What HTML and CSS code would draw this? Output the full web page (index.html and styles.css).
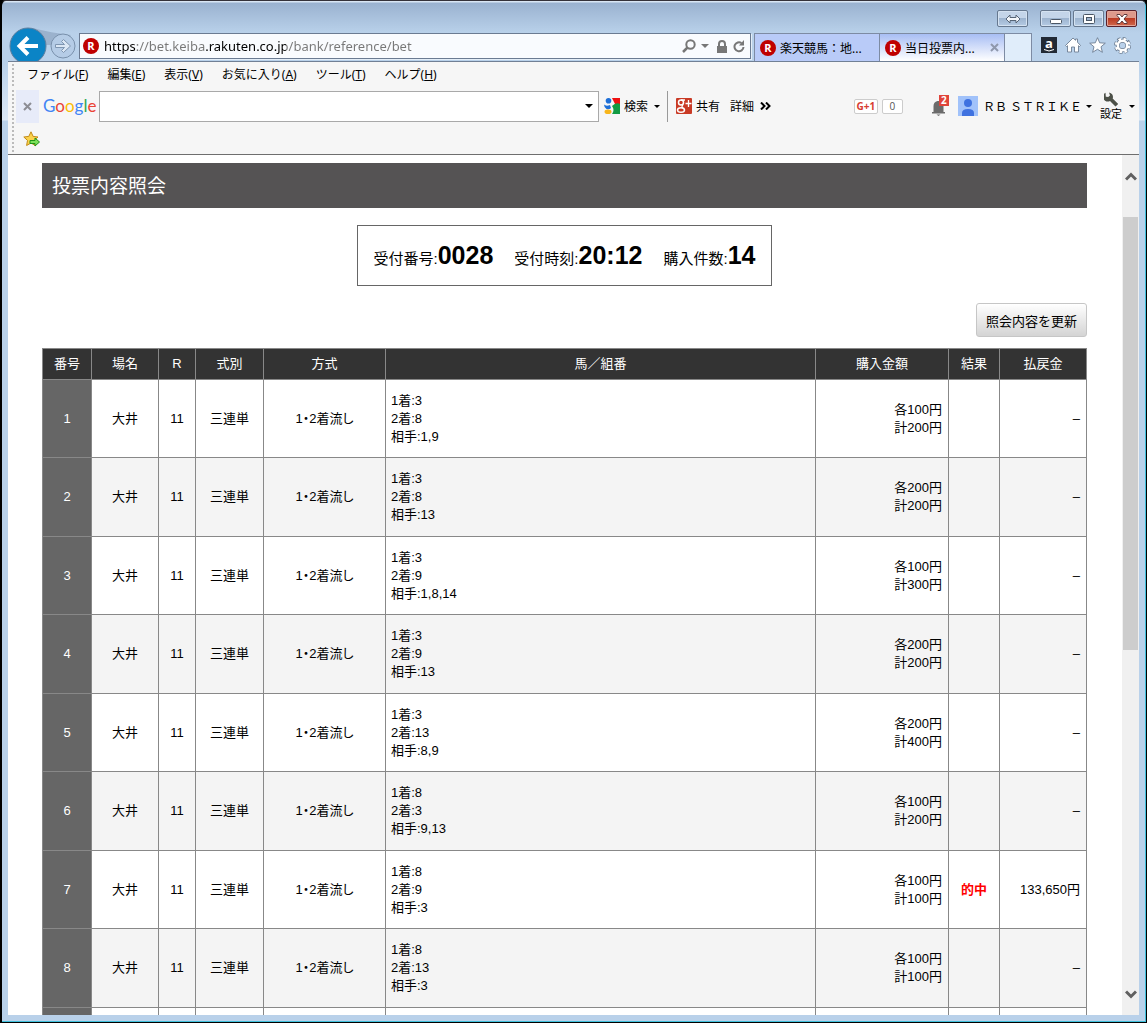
FILE: index.html
```html
<!DOCTYPE html>
<html lang="ja">
<head>
  <meta charset="UTF-8">
  <meta name="viewport" content="width=device-width, initial-scale=1.0">
  <title>投票内容照会</title>
  <link rel="stylesheet" href="styles.css">
</head>
<body>
<div class="window">

  <div class="caption">
    <button class="cap-btn" aria-label="切り替え"><svg width="16" height="10" viewBox="0 0 16 10"><path d="M1 5l4-4v2.500h6V1l4 4-4 4V6.500H5V9z" fill="#f4f7fb" stroke="#566577"/></svg></button>
    <button class="cap-btn cap-gap" aria-label="最小化"><svg width="12" height="10" viewBox="0 0 12 10"><rect x=".5" y="5.500" width="11" height="4" rx="1" fill="#fff" stroke="#4a5665"/></svg></button>
    <button class="cap-btn" aria-label="最大化"><svg width="12" height="10" viewBox="0 0 12 10"><rect x=".5" y=".5" width="11" height="9" rx="1" fill="#fff" stroke="#4a5665"/><rect x="3.500" y="3.500" width="5" height="3" fill="#9db4cf" stroke="#4a5665"/></svg></button>
    <button class="cap-btn cap-close" aria-label="閉じる"><svg width="12" height="10" viewBox="0 0 12 10"><path d="M1 .5h3L6 3l2-2.500h3v1L8 5l3 3.500v1H8L6 7 4 9.500H1v-1L4 5 1 1.500z" fill="#fff" stroke="#5d3a3d"/></svg></button>
  </div>

  <div class="nav">
    <button class="back" aria-label="戻る">
      <svg width="38" height="34" viewBox="0 0 38 34">
        <path d="M24 1Q42 6 62 8L50 18H36z" fill="#9bb2cd"/>
        <circle cx="19" cy="19" r="18" fill="#0b84c6" stroke="#5f7f9e"/>
        <path d="M29 19H11M19 10.500L10.500 19l8.500 8.500" fill="none" stroke="#fff" stroke-width="4"/>
      </svg>
    </button>
    <button class="forward" aria-label="進む">
      <svg width="26" height="26" viewBox="0 0 26 26">
        <circle cx="13" cy="13" r="12" fill="#b5cce6" stroke="#7990ab"/>
        <path d="M5.500 11.500h9L11.500 8.500 13.500 6.500 20.500 13l-7 6.500-2-2 3-3h-9z" fill="#dbe7f4" stroke="#7e95b0"/>
      </svg>
    </button>
    <form class="address">
      <span class="favicon">R</span>
      <input class="url" type="text" aria-label="アドレス" value="https://bet.keiba.rakuten.co.jp/bank/reference/bet">
      <svg width="14" height="14" viewBox="0 0 14 14"><circle cx="8.500" cy="5.500" r="4.200" fill="none" stroke="#777" stroke-width="2"/><path d="M5.500 8.500L1 13" stroke="#777" stroke-width="2.500"/></svg>
      <i class="arrow gray"></i>
      <svg class="lock" width="10" height="13" viewBox="0 0 10 13"><path d="M2 6V4a3 3 0 0 1 6 0v2" fill="none" stroke="#777" stroke-width="2"/><rect y="6" width="10" height="7" fill="#777"/></svg>
      <svg width="12" height="13" viewBox="0 0 12 13"><path d="M8.500 3A4.500 4.500 0 1 0 10.500 7" fill="none" stroke="#777" stroke-width="2"/><path d="M6 5.500h5V0z" fill="#777"/></svg>
    </form>
    <a class="tab" href="#"><span class="favicon">R</span>楽天競馬：地...</a>
    <a class="tab active" href="#"><span class="favicon">R</span>当日投票内...
      <svg class="tab-close" width="9" height="9" viewBox="0 0 9 9"><path d="M1 1l7 7M8 1L1 8" stroke="#8f98ac" stroke-width="2"/></svg>
    </a>
    <button class="new-tab" aria-label="新しいタブ"></button>
    <div class="tools">
      <a class="amazon" href="#">a<svg width="10" height="3" viewBox="0 0 10 3"><path d="M0 .5q5 3 10 0" fill="none" stroke="#fff"/></svg></a>
      <svg width="16" height="16" viewBox="0 0 16 16"><path d="M8 1l2.500 2.300V2h2v3.200L15.500 8.500l-1 1-1-.8V15h-4v-5h-3v5h-4V8.700l-1 .8-1-1z" fill="#fff" stroke="#6d7e93" stroke-width=".9"/></svg>
      <svg width="17" height="16" viewBox="0 0 17 16"><path d="M8.500.7l2.200 5.100 5.600.4-4.300 3.600 1.400 5.500-4.900-3-4.900 3L5 9.800.7 6.200l5.600-.4z" fill="#fff" stroke="#6d7e93" stroke-width=".9"/></svg>
      <svg width="17" height="17" viewBox="0 0 17 17"><circle cx="8.500" cy="8.500" r="6.700" fill="none" stroke="#6d7e93" stroke-width="3.600" stroke-dasharray="3.300 1.960"/><circle cx="8.500" cy="8.500" r="4.800" fill="none" stroke="#6d7e93" stroke-width="4"/><circle cx="8.500" cy="8.500" r="6.500" fill="none" stroke="#fff" stroke-width="2.600" stroke-dasharray="2.500 2.605" stroke-dashoffset="-.3"/><circle cx="8.500" cy="8.500" r="4.700" fill="none" stroke="#fff" stroke-width="2.400"/><circle cx="8.500" cy="8.500" r="2.600" fill="#bad1ea"/></svg>
    </div>
  </div>

  <div class="bars">
    <div class="menu">
      <a href="#">ファイル(<u>F</u>)</a>
      <a href="#">編集(<u>E</u>)</a>
      <a href="#">表示(<u>V</u>)</a>
      <a href="#">お気に入り(<u>A</u>)</a>
      <a href="#">ツール(<u>T</u>)</a>
      <a href="#">ヘルプ(<u>H</u>)</a>
    </div>
    <div class="google">
      <button class="bar-close" aria-label="ツールバーを閉じる"><svg width="9" height="9" viewBox="0 0 9 9"><path d="M1 1l7 7M8 1L1 8" stroke="#8d8d94" stroke-width="2"/></svg></button>
      <a class="logo" href="#"><span class="b">G</span><span class="r">o</span><span class="y">o</span><span class="b">g</span><span class="g">l</span><span class="r">e</span></a>
      <div class="combo">
        <input type="text" aria-label="Google 検索">
        <i class="arrow"></i>
      </div>
      <button class="bar-btn">
        <svg width="16" height="16" viewBox="0 0 16 16"><path d="M8 0h8v7l-5-1z" fill="#ee1111"/><path d="M8 8q4-4 8-2v10H8q3-4 0-8z" fill="#129b43"/><circle cx="4.500" cy="2.800" r="2.800" fill="#1d6fd8"/><path d="M0 6.500q2 2 6 .5l1 3q-2 2-4.500 1Q0 9.500 0 6.500z" fill="#1d6fd8"/><ellipse cx="4" cy="13.700" rx="3.500" ry="2.300" fill="#f7b51b"/></svg>
        検索
      </button>
      <i class="arrow search-arrow"></i>
      <span class="split"></span>
      <button class="bar-btn share">
        <svg width="16" height="16" viewBox="0 0 16 16"><rect width="16" height="16" rx="1" fill="#c93a25"/><circle cx="5" cy="4.500" r="2.500" fill="none" stroke="#fff" stroke-width="1.500"/><path d="M5 2h4M7 7q-2 1.500 0 3" fill="none" stroke="#fff" stroke-width="1.300"/><ellipse cx="5" cy="12" rx="3.500" ry="2.300" fill="none" stroke="#fff" stroke-width="1.500"/><path d="M12.500 2v7M9.500 5.500h6" stroke="#fff" stroke-width="1.300"/></svg>
        共有
      </button>
      <button class="bar-btn more">詳細
        <svg width="11" height="8" viewBox="0 0 11 8"><path d="M1 .5L4.500 4 1 7.500M6 .5L9.500 4 6 7.500" fill="none" stroke="#000" stroke-width="2"/></svg>
      </button>
      <div class="account">
        <span class="plus"><b>G+1</b></span>
        <span class="count">0</span>
        <span class="bell">
          <svg width="15" height="16" viewBox="0 0 15 16"><path d="M1 12h1.500V6q0-4 4-5h2q4 1 4 5v6H14v1.500H1z" fill="#6b6b6b"/><path d="M5.500 14.500h4L7.500 16z" fill="#6b6b6b"/></svg>
          <span class="badge">2</span>
        </span>
        <svg class="avatar" width="20" height="20" viewBox="0 0 20 20"><rect width="20" height="20" fill="#a1c2fa"/><circle cx="10" cy="7" r="4" fill="#3f72e0"/><path d="M4 20v-3q0-4 6-4t6 4v3z" fill="#3f72e0"/></svg>
        <a class="user" href="#">ＲＢ ＳＴＲＩＫＥ</a>
        <i class="arrow"></i>
        <button class="settings">
          <svg width="15" height="15" viewBox="0 0 15 15"><path d="M1.500.8A4.500 4.500 0 0 0 6 9l5.500 5.500L14.200 12 8.700 6.500A4.500 4.500 0 0 0 5 .5L6 3.500 4.200 5 .8 4.500A4 4 0 0 0 2 7" fill="#4d5148"/></svg>
          設定
        </button>
        <i class="arrow"></i>
      </div>
    </div>
    <div class="favorites">
      <svg width="17" height="16" viewBox="0 0 17 16"><path d="M8 .8l2.100 4.600 4.900.6-3.600 3.400.9 5.100L8 12l-4.400 2.500.9-5.100L.8 6l5-.6z" fill="#fbd24c" stroke="#c28a16"/><path d="M7 9.500h5V7l4.500 4-4.500 4v-2.500H7z" fill="#7be05a" stroke="#1f9417"/></svg>
    </div>
  </div>

  <div class="view">
    <main class="page">
      <h1>投票内容照会</h1>
      <div class="summary">
        <span>受付番号:<strong>0028</strong></span>
        <span>受付時刻:<strong>20:12</strong></span>
        <span>購入件数:<strong>14</strong></span>
      </div>
      <div class="update"><button class="update-btn">照会内容を更新</button></div>
      <table class="bets">
        <colgroup>
          <col class="c-no"><col class="c-place"><col class="c-race"><col class="c-type"><col class="c-method"><col><col class="c-amount"><col class="c-result"><col class="c-refund">
        </colgroup>
        <thead>
          <tr><th>番号</th><th>場名</th><th>R</th><th>式別</th><th>方式</th><th>馬／組番</th><th>購入金額</th><th>結果</th><th>払戻金</th></tr>
        </thead>
        <tbody>
          <tr><th>1</th><td>大井</td><td>11</td><td>三連単</td><td>1・2着流し</td><td class="horses">1着:3<br>2着:8<br>相手:1,9</td><td class="num">各100円<br>計200円</td><td></td><td class="num">–</td></tr>
          <tr><th>2</th><td>大井</td><td>11</td><td>三連単</td><td>1・2着流し</td><td class="horses">1着:3<br>2着:8<br>相手:13</td><td class="num">各200円<br>計200円</td><td></td><td class="num">–</td></tr>
          <tr><th>3</th><td>大井</td><td>11</td><td>三連単</td><td>1・2着流し</td><td class="horses">1着:3<br>2着:9<br>相手:1,8,14</td><td class="num">各100円<br>計300円</td><td></td><td class="num">–</td></tr>
          <tr><th>4</th><td>大井</td><td>11</td><td>三連単</td><td>1・2着流し</td><td class="horses">1着:3<br>2着:9<br>相手:13</td><td class="num">各200円<br>計200円</td><td></td><td class="num">–</td></tr>
          <tr><th>5</th><td>大井</td><td>11</td><td>三連単</td><td>1・2着流し</td><td class="horses">1着:3<br>2着:13<br>相手:8,9</td><td class="num">各200円<br>計400円</td><td></td><td class="num">–</td></tr>
          <tr><th>6</th><td>大井</td><td>11</td><td>三連単</td><td>1・2着流し</td><td class="horses">1着:8<br>2着:3<br>相手:9,13</td><td class="num">各100円<br>計200円</td><td></td><td class="num">–</td></tr>
          <tr><th>7</th><td>大井</td><td>11</td><td>三連単</td><td>1・2着流し</td><td class="horses">1着:8<br>2着:9<br>相手:3</td><td class="num">各100円<br>計100円</td><td class="hit">的中</td><td class="num">133,650円</td></tr>
          <tr><th>8</th><td>大井</td><td>11</td><td>三連単</td><td>1・2着流し</td><td class="horses">1着:8<br>2着:13<br>相手:3</td><td class="num">各100円<br>計100円</td><td></td><td class="num">–</td></tr>
          <tr><th></th><td></td><td></td><td></td><td></td><td></td><td></td><td></td><td></td></tr>
        </tbody>
      </table>
    </main>
    <div class="scrollbar">
      <button class="scroll-btn" aria-label="上へ"><svg width="12" height="9" viewBox="0 0 12 9"><path d="M1 7.500l5-5 5 5" fill="none" stroke="#606060" stroke-width="3"/></svg></button>
      <div class="track"><div class="thumb"></div></div>
      <button class="scroll-btn" aria-label="下へ"><svg width="12" height="9" viewBox="0 0 12 9"><path d="M1 1.500l5 5 5-5" fill="none" stroke="#606060" stroke-width="3"/></svg></button>
    </div>
  </div>

</div>
</body>
</html>
```
FILE: styles.css
```css
* { box-sizing: border-box; }
body {
  margin: 0;
  background: #000;
  font-family: "Liberation Sans", "Noto Sans CJK JP", sans-serif;
  font-size: 13px;
  color: #000;
}
button, input {
  font: inherit;
  color: inherit;
  border: 0;
  padding: 0;
  margin: 0;
  background: none;
}
a { color: inherit; text-decoration: none; }
svg { display: block; flex: none; }

/* window frame */
.window {
  display: flex;
  flex-direction: column;
  height: 100vh;
  padding: 0 7px 7px 6px;
  overflow: hidden;
  border: 1px solid #000;
  border-top-color: #35323a;
  border-left-width: 2px;
  border-radius: 6px 6px 0 0;
  background: linear-gradient(#d9e6f4 1px, #9ab2d0 2px, #b9d1ea 32px, #b9d1ea 62px, #dce8f5 119px, #b9d1ea 120px);
  box-shadow: inset -1px -1px #3fc0dc;
}
.caption {
  display: flex;
  justify-content: flex-end;
  gap: 2px;
  height: 32px;
  flex: none;
  padding: 9px 2px 0 0;
}
.cap-btn {
  display: flex;
  align-items: center;
  justify-content: center;
  width: 31px;
  height: 17px;
  border: 1px solid #66788f;
  border-radius: 2px;
  background: linear-gradient(#c4d5e9 50%, #9db4cf 50%, #b5cbe4);
  box-shadow: inset 0 0 0 1px #d4e2f1;
}
.cap-gap { margin-left: 10px; }
.cap-close {
  border-color: #59202a;
  background: linear-gradient(#dd998b 50%, #bb3a22 50%, #d0694d);
  box-shadow: inset 0 0 0 1px #e3a598;
}

/* address bar and tabs */
.nav {
  display: flex;
  flex: none;
  height: 28px;
  font-family: "Noto Sans", "Noto Sans CJK JP", sans-serif;
}
.back { width: 38px; height: 34px; margin: -6px 3px 0 1px; }
.back svg { overflow: visible; }
.forward { width: 26px; height: 26px; position: relative; }
.address {
  display: flex;
  align-items: center;
  flex: 1;
  height: 26px;
  margin: 0 3px 0 3px;
  padding: 0 5px 0 3px;
  border: 1px solid #6b7b92;
  background: #f9fbfe;
  box-shadow: 1px 1px #e4eef8;
}
.favicon {
  width: 16px;
  height: 16px;
  flex: none;
  border-radius: 8px;
  background: #bf0000;
  color: #fff;
  font: bold 11px/16px "Open Sans", sans-serif;
  text-align: center;
}
.url {
  flex: 1;
  min-width: 0;
  height: 22px;
  padding-left: 5px;
  background: linear-gradient(90deg, #000 37px, #777 37px, #777 107px, #000 107px, #000 187px, #777 187px);
  background-clip: text;
  color: transparent;
}
.arrow {
  flex: none;
  border: 4px solid transparent;
  border-top-color: #000;
  border-bottom: 0;
}
.arrow.gray { margin: 0 8px 0 5px; border-top-color: #777; }
.lock { margin-right: 6px; }
.tab {
  display: flex;
  align-items: center;
  gap: 4px;
  width: 125px;
  height: 28px;
  padding-left: 5px;
  border: 1px solid #7d8ba3;
  border-width: 1px 0 0 1px;
  background: #b9cbf8;
  font-size: 12px;
  white-space: nowrap;
}
.tab.active {
  width: 126px;
  border-right-width: 1px;
  background: linear-gradient(#a8bef4, #fff);
}
.tab-close { margin: 0 5px 0 auto; }
.new-tab {
  width: 27px;
  border: 1px solid #7d8ba3;
  border-width: 1px 1px 0 0;
  background: #e0edfa;
}
.tools {
  display: flex;
  align-items: center;
  gap: 8px;
  padding: 0 8px 4px 9px;
}
.amazon {
  display: flex;
  flex-direction: column;
  align-items: center;
  width: 16px;
  height: 16px;
  background: #222a35;
  color: #fff;
  font: bold 13px/12px "Open Sans", sans-serif;
}

/* toolbars */
.bars {
  flex: none;
  height: 94px;
  border-top: 1px solid #718095;
  border-bottom: 1px solid #6e6e6e;
  background: #f6f6f6;
  font-family: "Noto Sans", "Noto Sans CJK JP", sans-serif;
  font-size: 12px;
}
.menu, .google, .favorites {
  display: flex;
  align-items: center;
  background: radial-gradient(circle, #bbb 1px, transparent 1px) 3px 1px / 4px 4px repeat-y;
}
.menu { gap: 19px; height: 26px; padding-left: 19px; }
.menu a { line-height: 24px; }
.google { height: 36px; padding-left: 8px; }
.favorites { height: 30px; padding-left: 15px; }
.bar-close {
  display: flex;
  align-items: center;
  justify-content: center;
  width: 23px;
  height: 33px;
  background: #e7ebf9;
}
.logo {
  width: 60px;
  flex: none;
  padding-left: 4px;
  font: 17px/30px Lato, sans-serif;
}
.b { color: #4285f4; }
.r { color: #ea4335; }
.y { color: #fbbc05; }
.g { color: #34a853; }
.combo {
  display: flex;
  align-items: center;
  flex: 1;
  max-width: 500px;
  height: 31px;
  padding-right: 5px;
  border: 1px solid #a9a9a9;
  background: #fff;
}
.combo input { flex: 1; min-width: 0; }
.bar-btn {
  display: flex;
  align-items: center;
  gap: 4px;
  margin-left: 5px;
  white-space: nowrap;
}
.search-arrow { border-width: 3px 3px 0; margin: 0 7px 0 6px; }
.split { width: 1px; height: 31px; background: #999; }
.share { margin-left: 8px; }
.more { margin-left: 10px; gap: 6px; }
.account {
  display: flex;
  align-items: center;
  margin-left: auto;
  padding-right: 4px;
}
.account .arrow { border-width: 3px 3px 0; }
.plus, .count {
  height: 15px;
  border: 1px solid #ccc;
  border-radius: 2px;
  background: #fff;
  font: 10px/13px "Open Sans", sans-serif;
  text-align: center;
}
.plus { width: 24px; color: #d73d32; }
.count { width: 21px; margin: 0 28px 0 4px; color: #555; }
.bell { position: relative; width: 18px; margin-right: 9px; padding-top: 4px; }
.badge {
  position: absolute;
  top: -1px;
  right: 0;
  width: 10px;
  background: #e0443a;
  color: #fff;
  font: bold 10px/11px "Open Sans", sans-serif;
  text-align: center;
}
.user { margin: 0 4px 0 5px; white-space: nowrap; }
.settings {
  display: flex;
  flex-direction: column;
  align-items: center;
  margin: 0 7px 0 8px;
  font-size: 11px;
  line-height: 14px;
}

/* page */
.view {
  display: flex;
  flex: 1;
  min-height: 0;
  background: #fff;
}
.page {
  flex: 1;
  min-width: 0;
  overflow: hidden;
  padding: 8px 35px 0 34px;
}
h1 {
  margin: 0;
  padding: 2px 0 0 10px;
  background: #555354;
  color: #fff;
  font-size: 19px;
  font-weight: normal;
  line-height: 43px;
}
.summary {
  display: flex;
  justify-content: center;
  align-items: center;
  gap: 21px;
  width: fit-content;
  height: 61px;
  margin: 17px auto;
  padding: 0 16px;
  border: 1px solid #666;
  font-size: 15px;
}
.summary strong { font-size: 25px; }
.update { display: flex; justify-content: flex-end; margin-bottom: 11px; }
.update-btn {
  height: 34px;
  padding: 0 9px;
  border: 1px solid #c6c6c6;
  border-radius: 3px;
  background: linear-gradient(#fff, #d4d4d4);
}
.bets {
  width: 100%;
  table-layout: fixed;
  border-collapse: collapse;
  line-height: 18px;
  text-align: center;
  font-feature-settings: "palt";
}
.bets th, .bets td {
  height: 78px;
  padding: 0 6px;
  border: 1px solid #888;
  font-weight: normal;
}
.bets tr:nth-child(even) > * { height: 79px; }
.bets tr:nth-child(even) td { background: #f4f4f4; }
.bets th { background: #666; color: #fff; }
.bets thead th { height: 31px; background: #333; }
.bets .horses { padding-left: 5px; text-align: left; }
.bets .num { text-align: right; }
.bets .hit { padding: 0; color: #f00; font-weight: bold; }
.c-no { width: 49px; }
.c-place { width: 67px; }
.c-race { width: 37px; }
.c-type { width: 68px; }
.c-method { width: 122px; }
.c-amount { width: 133px; }
.c-result { width: 51px; }
.c-refund { width: 87px; }

.scrollbar {
  display: flex;
  flex-direction: column;
  width: 17px;
  background: #f0f0f0;
}
.scroll-btn {
  display: flex;
  align-items: center;
  justify-content: center;
  height: 42px;
}
.track {
  display: flex;
  flex-direction: column;
  flex: 1;
  padding: 0 1px;
}
.track::before { content: ""; flex: 20; }
.track::after { content: ""; flex: 323; }
.thumb { flex: 433; background: #cdcdcd; }
```
